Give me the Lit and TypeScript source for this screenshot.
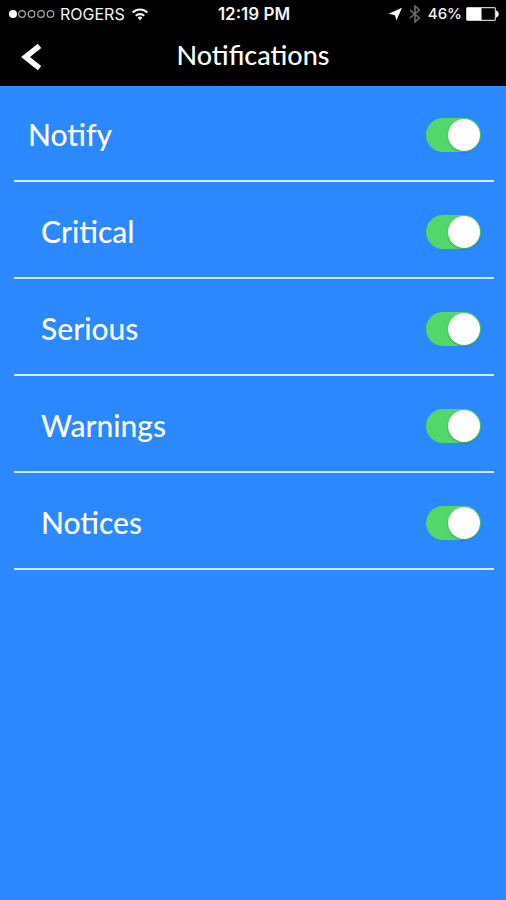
import { LitElement, html, css, svg } from "lit";
import { customElement, property, state } from "lit/decorators.js";
import { classMap } from "lit/directives/class-map.js";

@customElement("status-bar")
class StatusBar extends LitElement {
  static styles = css`
    :host {
      display: grid;
      grid-template-columns: 1fr auto 1fr;
      align-items: center;
      height: 28px;
      padding: 0 7px 0 9px;
      color: #f4f4f4;
      font: 400 16px/28px Inter, "Liberation Sans", sans-serif;
    }
    .group {
      display: flex;
      align-items: center;
      gap: 5px;
    }
    .end {
      gap: 6px;
      justify-content: flex-end;
    }
    .time {
      font-size: 17px;
      font-weight: 600;
    }
    .charge {
      display: flex;
      align-items: center;
      gap: 4px;
      font-size: 15px;
      font-weight: 500;
    }
    svg {
      display: block;
      flex: none;
    }
  `;

  render() {
    return html`
      <div class="group">
        <svg width="46" height="10" viewBox="0 0 46 10" role="img" aria-label="Signal: 1 of 5">
          <circle cx="4" cy="5" r="4" fill="#fff" />
          ${[13, 22.5, 32, 41.5].map(
            (x) => svg`<circle cx=${x} cy="5" r="3.3" fill="none" stroke="#aaa" stroke-width="1.2" />`
          )}
        </svg>
        <span>ROGERS</span>
        <svg width="20" height="14" viewBox="0 0 20 14" role="img" aria-label="Wi-Fi">
          <g fill="none" stroke="#f4f4f4" stroke-width="2.2">
            <path d="M2.6 5.6a10.4 10.4 0 0 1 14.8 0" />
            <path d="M5.8 8.8a6 6 0 0 1 8.4 0" />
          </g>
          <path d="M10 13.2 7.6 10.8a3.4 3.4 0 0 1 4.8 0z" fill="#f4f4f4" />
        </svg>
      </div>
      <span class="time">12:19 PM</span>
      <div class="group end">
        <svg width="14" height="14" viewBox="0 0 14 14" role="img" aria-label="Location">
          <path d="M14 .8 8.4 13.4 7 8.2 .6 6.8z" fill="#fff" />
        </svg>
        <svg width="14" height="18" viewBox="1 0 14 18" role="img" aria-label="Bluetooth">
          <path d="M3 5l9.4 8L8 17V1l4.4 4L3 13" fill="none" stroke="#6c6c6c" stroke-width="1.6" />
        </svg>
        <div class="charge">
          <span>46%</span>
          <svg width="33" height="14" viewBox="0 0 33 14" role="img" aria-label="Battery">
            <rect x="0.6" y="0.6" width="28.8" height="12.8" rx="1.2" fill="none" stroke="#ccc" stroke-width="1.2" />
            <rect x="1" y="1" width="14.5" height="12" fill="#fff" />
            <path d="M30 3.5c2 .6 2.8 2 2.8 3.5s-.8 2.900-2.800 3.500z" fill="#fff" />
          </svg>
        </div>
      </div>
    `;
  }
}

@customElement("toggle-row")
class ToggleRow extends LitElement {
  @property() label = "";
  @property({ type: Boolean }) nested = false;
  @property({ type: Boolean }) checked = false;

  static styles = css`
    :host {
      display: block;
    }
    .row {
      box-sizing: border-box;
      display: flex;
      align-items: center;
      justify-content: space-between;
      height: 96px;
      padding: 4px 13px 0 14px;
      border-bottom: 2px solid #d6e8ff;
      color: #fff;
      font: 500 30px/40px "Lato Medium", Lato, Carlito, sans-serif;
    }
    .nested {
      height: 97px;
      padding-left: 27px;
    }
    label {
      padding-bottom: 2px;
    }
    .switch {
      appearance: none;
      flex: none;
      display: flex;
      align-items: center;
      width: 55px;
      height: 34px;
      margin: 0;
      padding: 0 1px;
      border-radius: 17px;
      background: #8fb8ee;
      cursor: pointer;
    }
    .switch::before {
      content: "";
      width: 32px;
      height: 32px;
      border-radius: 50%;
      background: #fff;
      box-shadow: 0 1px 2px rgba(0, 40, 60, 0.35);
    }
    .switch:checked {
      justify-content: flex-end;
      background: #53d769;
    }
  `;

  private onChange(e: Event) {
    this.checked = (e.target as HTMLInputElement).checked;
  }

  render() {
    return html`
      <div class=${classMap({ row: true, nested: this.nested })}>
        <label for="switch">${this.label}</label>
        <input id="switch" class="switch" type="checkbox" role="switch" .checked=${this.checked} @change=${this.onChange} />
      </div>
    `;
  }
}

@customElement("app-root")
class AppRoot extends LitElement {
  @state() private items = [
    { label: "Notify", nested: false },
    { label: "Critical", nested: true },
    { label: "Serious", nested: true },
    { label: "Warnings", nested: true },
    { label: "Notices", nested: true },
  ];

  static styles = css`
    :host {
      display: block;
      min-height: 100vh;
      background: #2b88ff;
    }
    header {
      background: #000;
    }
    .nav {
      display: grid;
      grid-template-columns: 48px 1fr 48px;
      align-items: center;
      height: 58px;
      padding: 0 8px;
    }
    .back {
      display: grid;
      place-items: center;
      width: 48px;
      height: 48px;
      padding: 0;
      border: 0;
      background: none;
      cursor: pointer;
    }
    h1 {
      margin: 0;
      padding-bottom: 4px;
      color: #fff;
      text-align: center;
      font: 500 27px/36px "Lato Medium", Lato, Carlito, sans-serif;
    }
    main {
      padding: 0 12px 0 14px;
    }
  `;

  render() {
    return html`
      <header>
        <status-bar></status-bar>
        <div class="nav">
          <button class="back" aria-label="Back">
            <svg width="22" height="28" viewBox="0 0 22 28">
              <path d="M18.5 2.8 4.5 14l14 11.2" fill="none" stroke="#fff" stroke-width="5.5" />
            </svg>
          </button>
          <h1>Notifications</h1>
        </div>
      </header>
      <main>
        ${this.items.map(
          (item) => html`<toggle-row .label=${item.label} ?nested=${item.nested} checked></toggle-row>`
        )}
      </main>
    `;
  }
}
